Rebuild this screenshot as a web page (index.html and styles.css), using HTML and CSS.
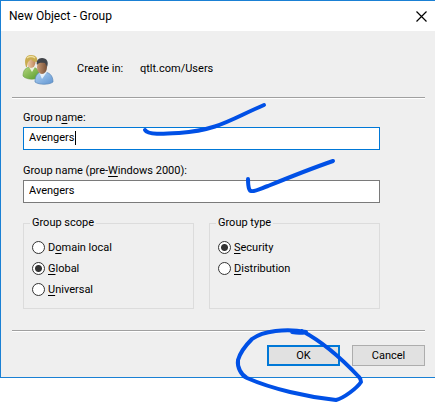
FILE: index.html
```html
<!DOCTYPE html>
<html lang="en">
<head>
<meta charset="utf-8">
<title>New Object - Group</title>
<link rel="stylesheet" href="styles.css">
</head>
<body>
<main class="dialog">
  <header class="titlebar">
    <h1 class="title">New Object - Group</h1>
    <button class="close" type="button" aria-label="Close">
      <svg width="11" height="11" viewBox="0 0 11 11"><path d="M.5 .5l10 10M10.5 .5l-10 10" stroke="#000" stroke-width="1.2" fill="none"/></svg>
    </button>
  </header>
  <form class="content">
    <div class="location">
      <svg class="users" width="32" height="32" viewBox="0 0 32 32" aria-hidden="true">
        <defs>
          <linearGradient id="green" x1="0" y1="0" x2="1" y2="1"><stop offset="0" stop-color="#b5d77f"/><stop offset="1" stop-color="#559a28"/></linearGradient>
          <linearGradient id="blue" x1="0" y1="0" x2="1" y2="1"><stop offset="0" stop-color="#b4d5f5"/><stop offset="1" stop-color="#6094d0"/></linearGradient>
          <linearGradient id="fair" x1="0" x2="1"><stop offset="0" stop-color="#f3d4b4"/><stop offset="1" stop-color="#bd8458"/></linearGradient>
          <linearGradient id="dark" x1="0" x2="1"><stop offset="0" stop-color="#c99a74"/><stop offset="1" stop-color="#785036"/></linearGradient>
        </defs>
        <path d="M1 23C1 17 4 14 9 14s9 3 9 10c-4 3-14 3-17-1z" fill="url(#green)" stroke="#6c9d48" stroke-width=".6"/>
        <path d="M7 14l3 5 3-5z" fill="#edf3df"/>
        <ellipse cx="9" cy="9" rx="4.500" ry="6" fill="url(#fair)"/>
        <path d="M4 14C2 8 3 2 9 2c5 0 7 3 6 7-3 0-5-1-6-3-1 2-4 2-4 8z" fill="#c9ac50"/>
        <path d="M5 5c2-2 6-2 8 0" stroke="#eee0a0" stroke-width="1.300" fill="none"/>
        <path d="M13 29c0-7 3-10 8-10 6 0 10 3 10 10-4 3-14 3-18 0z" fill="url(#blue)" stroke="#5a87b8" stroke-width=".7"/>
        <path d="M17 19l3 7 5-7z" fill="#e6f1fb"/>
        <ellipse cx="20" cy="14" rx="5" ry="7" fill="url(#dark)"/>
        <path d="M15 12c-1-4 1-7 5-7 5 0 7 4 5 9l-2-4c-3 0-6-1-8 2z" fill="#414449"/>
      </svg>
      <span class="location-label">Create in:</span>
      <span>qtlt.com/Users</span>
    </div>
    <hr class="rule">
    <div class="fields">
      <label for="name">Group n<u>a</u>me:</label>
      <div class="field active"><input id="name" type="text" value="Avengers"><span class="caret"></span></div>
      <label for="legacy">Group name (pre-<u>W</u>indows 2000):</label>
      <div class="field"><input id="legacy" type="text" value="Avengers"></div>
      <div class="groups">
        <fieldset>
          <legend>Group scope</legend>
          <label class="option"><input type="radio" name="scope"><span>D<u>o</u>main local</span></label>
          <label class="option"><input type="radio" name="scope" checked><span><u>G</u>lobal</span></label>
          <label class="option"><input type="radio" name="scope"><span><u>U</u>niversal</span></label>
        </fieldset>
        <fieldset>
          <legend>Group type</legend>
          <label class="option"><input type="radio" name="type" checked><span><u>S</u>ecurity</span></label>
          <label class="option"><input type="radio" name="type"><span><u>D</u>istribution</span></label>
        </fieldset>
      </div>
    </div>
    <hr class="rule">
    <div class="actions">
      <button class="action primary" type="button">OK</button>
      <button class="action" type="button">Cancel</button>
    </div>
  </form>
</main>
<svg class="ink" width="435" height="403" viewBox="0 0 435 403" aria-hidden="true">
  <path d="M145 130c3 5 18 4 34 3 40-3 52-14 85-28"/>
  <path d="M248 179c0 7 1 12 3 12 4 1 11-3 17-5 22-9 42-17 65-25"/>
  <path d="M292 332c5 1 10 1 14 0-20-4-43-1-54 7-5 5-12 14-14 21-1 7 3 15 9 18 25 11 60 19 89 22 8-2 21-12 25-18 0-3-1-4-2-5-16-17-36-35-57-46"/>
</svg>
</body>
</html>
```
FILE: styles.css
```css
* { box-sizing: border-box; }
body {
  position: relative;
  min-height: 100vh;
  margin: 0;
  background: #fff;
  color: #000;
  font: 11px/16px Roboto, "Noto Sans", sans-serif;
}
.dialog {
  background: #efefef;
  border: 1px solid #1a80d4;
  border-right: 0;
}
.titlebar {
  display: flex;
  align-items: center;
  justify-content: space-between;
  height: 30px;
  padding: 0 8px;
  background: #fff;
}
.title { margin: 0; font-size: 12px; font-weight: 400; }
.close {
  display: flex;
  padding: 0;
  border: 0;
  background: none;
}
.content { padding: 22px 10px 11px 11px; }
.location { display: flex; align-items: center; height: 32px; padding-left: 10px; }
.users { margin-right: 23px; }
.location-label { width: 63px; }
.rule {
  height: 2px;
  margin: 12px 0 0;
  border: 0;
  border-top: 1px solid #a0a0a0;
  background: #fff;
}
.fields { padding: 11px 45px 9px 11px; }
.fields > label { display: block; }
u { text-underline-offset: 2px; text-decoration-thickness: 1px; text-decoration-skip-ink: none; }
.field {
  display: flex;
  align-items: center;
  height: 23px;
  margin: 1px 0 13px;
  padding: 0 5px 2px;
  background: #fff;
  border: 1px solid #7a7a7a;
}
.field.active { border-color: #0078d7; }
.field input {
  field-sizing: content;
  padding: 0;
  border: 0;
  outline: 0;
  background: none;
  color: inherit;
  font: inherit;
}
.caret { width: 1px; height: 14px; background: #000; }
.groups { display: grid; grid-template-columns: 1fr 1fr; gap: 15px; margin-top: -1px; }
fieldset {
  min-width: 0;
  height: 94px;
  margin: 0;
  padding: 6px 8px;
  border: 1px solid #dcdcdc;
}
legend { margin-left: -2px; padding: 0 2px; }
.option { display: flex; align-items: center; gap: 3px; height: 21px; }
.option input {
  appearance: none;
  width: 13px;
  height: 13px;
  margin: 0;
  border: 1px solid #333;
  border-radius: 50%;
  background: #fff;
}
.option input:checked { background: radial-gradient(circle, #333 3px, #fff 4px); }
.actions { display: flex; justify-content: flex-end; gap: 12px; padding-top: 13px; }
.action {
  width: 73px;
  height: 21px;
  padding: 0;
  border: 1px solid #adadad;
  background: #e1e1e1;
  color: #000;
  font: inherit;
}
.action.primary { border: 2px solid #0078d7; }
.ink {
  position: absolute;
  top: 0;
  left: 0;
  fill: none;
  stroke: #0050e6;
  stroke-width: 4;
  stroke-linecap: round;
  stroke-linejoin: round;
  pointer-events: none;
}
```
